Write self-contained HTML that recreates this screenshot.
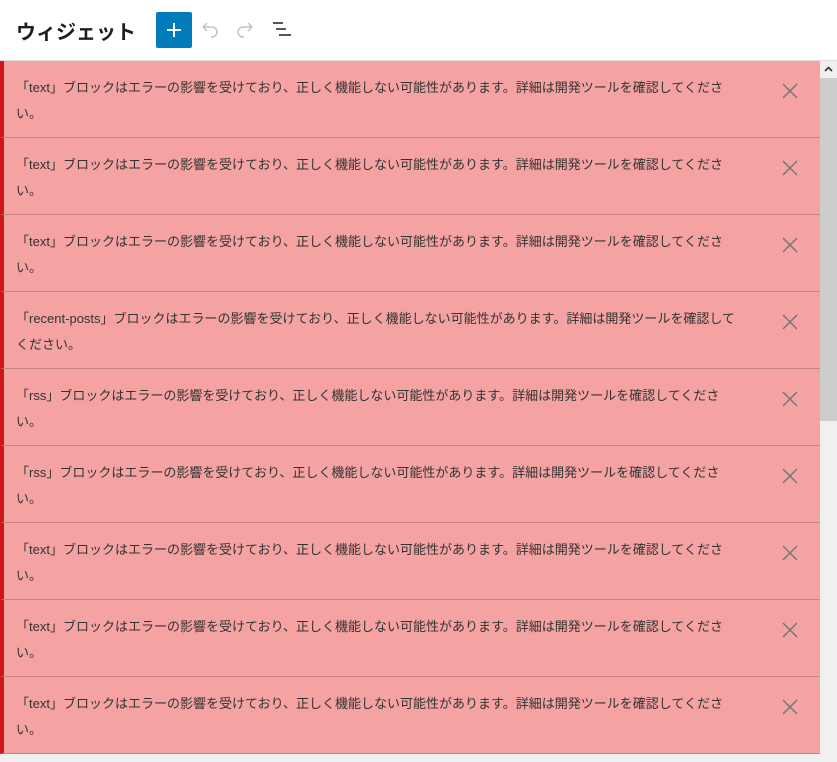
<!DOCTYPE html>
<html><head><meta charset="utf-8"><style>
*{margin:0;padding:0;box-sizing:border-box}
body{width:837px;height:762px;background:#f0f0f0;font-family:"Liberation Sans","Noto Sans CJK JP",sans-serif;overflow:hidden;position:relative}
.hdr{position:absolute;left:0;top:0;width:837px;height:61px;background:#fff;border-bottom:1px solid #ddd}
.hdr h1{position:absolute;left:16px;top:16px;font-size:20px;font-weight:bold;color:#1e1e1e}
.add{position:absolute;left:156px;top:12px;width:36px;height:36px;background:#007cba;border-radius:2px}
.list{position:absolute;left:0;top:61px;width:820px}
.n{height:77px;background:#f4a2a2;border-left:4px solid #cc1818;border-bottom:1px solid #c98585;position:relative}
.n p{position:absolute;left:12px;top:14px;font-size:13px;line-height:26px;color:#333;white-space:nowrap}
.n svg{position:absolute;left:773px;top:17px}
.sb{position:absolute;left:820px;top:61px;width:17px;height:701px;background:#f0f0f0}
.thumb{position:absolute;left:820px;top:78px;width:17px;height:343px;background:#cdcdcd}
</style></head><body>
<div class="hdr"><h1>ウィジェット</h1>
<div class="add"><svg width="36" height="36"><path d="M18 11v14M11 18h14" stroke="#fff" stroke-width="2"/></svg></div>
<svg style="position:absolute;left:199px;top:19px" width="22" height="22"><path d="M4 8h9a5 5 0 0 1 0 10h-1M4 8l4-4M4 8l4 4" fill="none" stroke="#c3c3c3" stroke-width="1.5"/></svg>
<svg style="position:absolute;left:234px;top:19px" width="22" height="22"><path d="M18 8H9a5 5 0 0 0 0 10h1M18 8l-4-4M18 8l-4 4" fill="none" stroke="#c3c3c3" stroke-width="1.5"/></svg>
<svg style="position:absolute;left:272px;top:20px" width="20" height="20"><path d="M1 3h10M4 9h10M7 15h12" stroke="#1e1e1e" stroke-width="1.6"/></svg>
</div>
<div class="list">
<div class="n"><p>「text」ブロックはエラーの影響を受けており、正しく機能しない可能性があります。詳細は開発ツールを確認してくださ<br>い。</p><svg width="26" height="26"><path d="M6 6l14 14M20 6L6 20" stroke="#777" stroke-width="1.5"/></svg></div>
<div class="n"><p>「text」ブロックはエラーの影響を受けており、正しく機能しない可能性があります。詳細は開発ツールを確認してくださ<br>い。</p><svg width="26" height="26"><path d="M6 6l14 14M20 6L6 20" stroke="#777" stroke-width="1.5"/></svg></div>
<div class="n"><p>「text」ブロックはエラーの影響を受けており、正しく機能しない可能性があります。詳細は開発ツールを確認してくださ<br>い。</p><svg width="26" height="26"><path d="M6 6l14 14M20 6L6 20" stroke="#777" stroke-width="1.5"/></svg></div>
<div class="n"><p>「recent-posts」ブロックはエラーの影響を受けており、正しく機能しない可能性があります。詳細は開発ツールを確認して<br>ください。</p><svg width="26" height="26"><path d="M6 6l14 14M20 6L6 20" stroke="#777" stroke-width="1.5"/></svg></div>
<div class="n"><p>「rss」ブロックはエラーの影響を受けており、正しく機能しない可能性があります。詳細は開発ツールを確認してくださ<br>い。</p><svg width="26" height="26"><path d="M6 6l14 14M20 6L6 20" stroke="#777" stroke-width="1.5"/></svg></div>
<div class="n"><p>「rss」ブロックはエラーの影響を受けており、正しく機能しない可能性があります。詳細は開発ツールを確認してくださ<br>い。</p><svg width="26" height="26"><path d="M6 6l14 14M20 6L6 20" stroke="#777" stroke-width="1.5"/></svg></div>
<div class="n"><p>「text」ブロックはエラーの影響を受けており、正しく機能しない可能性があります。詳細は開発ツールを確認してくださ<br>い。</p><svg width="26" height="26"><path d="M6 6l14 14M20 6L6 20" stroke="#777" stroke-width="1.5"/></svg></div>
<div class="n"><p>「text」ブロックはエラーの影響を受けており、正しく機能しない可能性があります。詳細は開発ツールを確認してくださ<br>い。</p><svg width="26" height="26"><path d="M6 6l14 14M20 6L6 20" stroke="#777" stroke-width="1.5"/></svg></div>
<div class="n"><p>「text」ブロックはエラーの影響を受けており、正しく機能しない可能性があります。詳細は開発ツールを確認してくださ<br>い。</p><svg width="26" height="26"><path d="M6 6l14 14M20 6L6 20" stroke="#777" stroke-width="1.5"/></svg></div>
</div>
<div class="sb"><svg width="17" height="17"><path d="M5 10l3.5-3.5L12 10" fill="none" stroke="#333" stroke-width="1.6"/></svg></div>
<div class="thumb"></div>
</body></html>
